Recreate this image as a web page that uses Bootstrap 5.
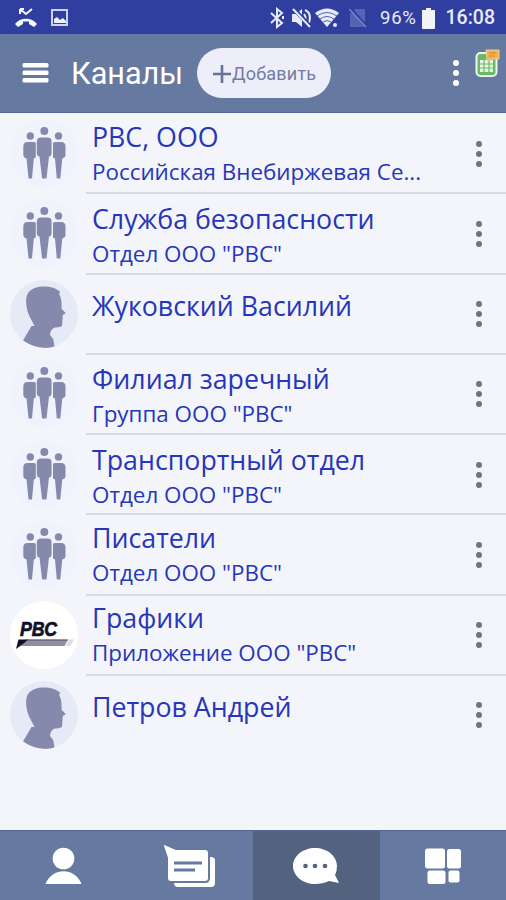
<!DOCTYPE html>
<html lang="ru">
<head>
<meta charset="utf-8">
<meta name="viewport" content="width=device-width, initial-scale=1">
<title>Каналы</title>
<link rel="stylesheet" href="https://cdn.jsdelivr.net/npm/bootstrap@5.3.0/dist/css/bootstrap.min.css">
<style>
body{background:#f3f5fa;font-family:"Open Sans","Noto Sans",sans-serif;height:900px;overflow:hidden}
svg{display:block;flex:none}
.status{height:34px;background:#303f9f;color:#e8ebf8;font:500 18.5px/34px Roboto,sans-serif;padding:2px 11px 0 15px}
.topbar{height:79px;background:#667aa1;border-bottom:1px solid #526995;padding:0 7px 0 22px}
.topbar h1{font:400 30.6px/40px Roboto,sans-serif;letter-spacing:0;margin:2px 0 0 22px;width:126px;white-space:nowrap}
.add-btn{width:134px;height:50px;border-radius:25px;background:#eeeefb;color:#727c9e;font:400 18px/50px Roboto,sans-serif;letter-spacing:.2px;padding:2px 0 0 15px;border:0}
.pct{margin-left:13px;letter-spacing:.7px;font-weight:400}
.clock{margin-left:10px;font-size:19.5px}
.chan{height:80.25px;padding-left:10px}
.avatar{width:68px;height:68px;margin:6.5px 8px 0 0;overflow:hidden;border-radius:50%;background:#f0f3fc}
.avatar.person{background:#e6eaf7}
.avatar.logo{background:#fff}
.info{border-bottom:2px solid #d9dbe1;margin-bottom:-1px;padding:0 15px 0 6px;color:#2736b8;min-width:0}
.chan:last-child .info{border-color:transparent}
.info>svg{margin-top:2px}
.label{padding-top:5.5px}
.name{font-size:26.75px;line-height:36px;white-space:nowrap}
.desc{font-size:22.4px;line-height:33px;white-space:nowrap}
.single .label{padding-top:14px}
.low .label{padding-top:7.5px}
.tabs{height:70px;background:#667aa1;border-top:1px solid #526995}
.tabs .active{background:#52627f}
</style>
</head>
<body class="d-flex flex-column">
<svg width="0" height="0" class="position-absolute">
<symbol id="group" viewBox="0 0 68 68"><g fill="#858aad"><circle cx="34.300" cy="7.500" r="4"/><path d="M31 14h6.600q4 0 4 4v12q0 2.500-2.600 3L36.500 55h-4.400L29.500 33q-2.700-.5-2.700-3V18q0-4 4.200-4Z"/><circle cx="20.300" cy="12.500" r="3.700"/><path d="M17.500 18.500H23q2.800 0 2.800 1V34q-1 .5-2 1L22 55h-3.500L16.500 35q-3.200-1-3.200-3v-9q0-4.500 4.200-4.500Z"/><circle cx="48.500" cy="12.500" r="3.700"/><path d="M51.300 18.500h-5.500q-2.800 0-2.800 1V34q1 .5 2 1l1.800 20h3.500l2-20q3.200-1 3.200-3v-9q0-4.500-4.200-4.500Z"/></g></symbol>
<symbol id="person" viewBox="0 0 68 68"><path fill="#858aad" d="M32 6.500c7-.5 14 1.500 18 5l-.8 2.800c1.500 2.500 2 5 2.300 8.200l.2 6.500 3.800 3.800q0 1.500-2.700 2L52 46q-3 1.500-7 1.500c-3 1-5 4-5 7.500l3.200 4 1.500 8.500Q27 70 13 60.500L21.500 46h3C22 40 19 37 17.500 31 15.500 23 15 14 21 10q5-3.500 11-3.500Z"/></symbol>
<symbol id="dots" viewBox="0 0 8 28"><circle cx="4" cy="4" r="3"/><circle cx="4" cy="14" r="3"/><circle cx="4" cy="24" r="3"/></symbol>
</svg>

<div class="status d-flex align-items-center flex-shrink-0">
<svg width="23" height="24" viewBox="0 0 23 24" fill="none" stroke="#f5f7ff"><path stroke-width="2" d="M5 8V3m0 0h4M5 3l6 5 6-5"/><path fill="#f5f7ff" stroke="none" d="M0 18C5 11 17 11 22 18l-3 3-5-3v-2.500H8V18l-5 3Z"/></svg>
<svg style="margin-left:12px" width="20" height="22" viewBox="0 0 20 22"><path fill="none" stroke="#cdd2ef" stroke-width="2" d="M2 3h15v15H2z"/><path fill="#eef0fb" d="M4 16v-4l3-2 3 3 3-2 3 3v2z"/></svg>
<div class="d-flex align-items-center ms-auto">
<svg width="14" height="22" viewBox="0 0 14 22" fill="none" stroke="#e8ebf8" stroke-width="2"><path d="m1 6 11 10-5 4V2l5 4L1 16"/><path d="M13 9v3" stroke-width="2"/></svg>
<svg style="margin-left:7px" width="21" height="22" viewBox="0 0 21 22"><path fill="#e8ebf8" d="M1 7h4l6-5v18l-6-5H1z"/><path fill="none" stroke="#e8ebf8" stroke-width="2" d="M13 7q3 4 0 8M14 3q7 3 4 13"/><path stroke="#303f9f" stroke-width="4" d="m2 1 18 19"/><path stroke="#e8ebf8" stroke-width="2" d="m2 2 17 18"/></svg>
<svg style="margin-left:3px" width="25" height="22" viewBox="0 0 25 22"><path fill="#e8ebf8" d="M0 6Q12-3 24 6L12 20Z"/><path stroke="#303f9f" fill="none" stroke-width=".8" d="M2 9q10-7 20 0M5 12q7-5 14 0M8 15q4-3 8 0"/><circle cx="20" cy="18" r="2" fill="#e8ebf8"/></svg>
<svg style="margin-left:9px" width="18" height="20" viewBox="0 0 18 20"><path fill="#5664b6" d="M6 1h10v18H1V6z"/><path stroke="#303f9f" stroke-width="3" d="m1 0 17 19"/><path stroke="#7985cb" stroke-width="1.500" d="m0 1 17 18"/></svg>
<span class="pct">96%</span>
<svg class="ms-1" width="15" height="21" viewBox="0 0 15 21"><path fill="#f2f2f7" d="M5 0h5v2h4v18q0 1-1 1H2q-1 0-1-1V2h4z"/></svg>
<span class="clock">16:08</span>
</div>
</div>

<header class="topbar d-flex align-items-center text-white flex-shrink-0">
<svg width="27" height="22" viewBox="0 0 27 22"><g fill="#fff"><rect x=".5" y="1" width="26" height="4.500" rx="1.500"/><rect x=".5" y="8.500" width="26" height="4.500" rx="1.500"/><rect x=".5" y="16" width="26" height="4.500" rx="1.500"/></g></svg>
<h1>Каналы</h1>
<button class="add-btn d-flex align-items-center"><svg width="20" height="20" viewBox="0 0 20 20"><path stroke="#65729a" stroke-width="2.600" d="M1 10h18M10 1v18"/></svg><span>Добавить</span></button>
<svg class="ms-auto" width="8" height="28" fill="#fff"><use href="#dots"/></svg>
<svg style="margin:-19px -1px 0 15px" width="25" height="30" viewBox="0 0 25 30"><rect x="1.500" y="4" width="20" height="23" rx="4" fill="#6bb86a" stroke="#edf5ec" stroke-width="2"/><path fill="#e7f6e2" d="M5 11h13v12H5z"/><path stroke="#6bb86a" stroke-width="1.200" d="M9 11v12M14 11v12M5 15h13M5 19h13"/><path fill="#f3b24c" stroke="#ead09d" d="M11 1h13v9H15l-3 2z"/><path stroke="#c98730" d="M14 4h7M14 7h6"/></svg>
</header>

<main class="flex-grow-1">
<div class="chan d-flex"><div class="avatar flex-shrink-0"><svg width="68" height="68"><use href="#group" y="3.500"/></svg></div><div class="info flex-grow-1 d-flex"><div class="label"><div class="name">РВС, ООО</div><div class="desc">Российская Внебиржевая Се...</div></div><svg class="ms-auto align-self-center" width="24" height="28" fill="#737479"><use href="#dots"/></svg></div></div>
<div class="chan d-flex"><div class="avatar flex-shrink-0"><svg width="68" height="68"><use href="#group" y="3.500"/></svg></div><div class="info low flex-grow-1 d-flex"><div class="label"><div class="name">Служба безопасности</div><div class="desc">Отдел ООО "РВС"</div></div><svg class="ms-auto align-self-center" width="24" height="28" fill="#737479"><use href="#dots"/></svg></div></div>
<div class="chan d-flex"><div class="avatar person flex-shrink-0"><svg width="68" height="68"><use href="#person"/></svg></div><div class="info single flex-grow-1 d-flex"><div class="label"><div class="name">Жуковский Василий</div></div><svg class="ms-auto align-self-center" width="24" height="28" fill="#737479"><use href="#dots"/></svg></div></div>
<div class="chan d-flex"><div class="avatar flex-shrink-0"><svg width="68" height="68"><use href="#group" y="3.500"/></svg></div><div class="info low flex-grow-1 d-flex"><div class="label"><div class="name">Филиал заречный</div><div class="desc">Группа ООО "РВС"</div></div><svg class="ms-auto align-self-center" width="24" height="28" fill="#737479"><use href="#dots"/></svg></div></div>
<div class="chan d-flex"><div class="avatar flex-shrink-0"><svg width="68" height="68"><use href="#group" y="3.500"/></svg></div><div class="info low flex-grow-1 d-flex"><div class="label"><div class="name">Транспортный отдел</div><div class="desc">Отдел ООО "РВС"</div></div><svg class="ms-auto align-self-center" width="24" height="28" fill="#737479"><use href="#dots"/></svg></div></div>
<div class="chan d-flex"><div class="avatar flex-shrink-0"><svg width="68" height="68"><use href="#group" y="3.500"/></svg></div><div class="info flex-grow-1 d-flex"><div class="label"><div class="name">Писатели</div><div class="desc">Отдел ООО "РВС"</div></div><svg class="ms-auto align-self-center" width="24" height="28" fill="#737479"><use href="#dots"/></svg></div></div>
<div class="chan d-flex"><div class="avatar logo flex-shrink-0"><svg width="68" height="68" viewBox="0 0 68 68"><text x="10" y="35" textLength="37" lengthAdjust="spacingAndGlyphs" font-family="Liberation Sans, sans-serif" font-size="20.500" font-weight="bold" font-style="italic" fill="#11102b" stroke="#11102b" stroke-width=".7">РВС</text><path fill="#8e8fa2" d="M16 38.500h42l-3.500 6.500H11z"/><path fill="#62637a" d="M16 38.500h42l-.6 1.200H15z"/><path fill="#dddde2" d="M59 38.500h5L60.500 45h-5z"/><path fill="#11102b" d="M8.500 38.500H18l-5 4.500-7 5z"/></svg></div><div class="info flex-grow-1 d-flex"><div class="label"><div class="name">Графики</div><div class="desc">Приложение ООО "РВС"</div></div><svg class="ms-auto align-self-center" width="24" height="28" fill="#737479"><use href="#dots"/></svg></div></div>
<div class="chan d-flex"><div class="avatar person flex-shrink-0"><svg width="68" height="68"><use href="#person"/></svg></div><div class="info single flex-grow-1 d-flex"><div class="label"><div class="name">Петров Андрей</div></div><svg class="ms-auto align-self-center" width="24" height="28" fill="#737479"><use href="#dots"/></svg></div></div>
</main>

<nav class="tabs row g-0 flex-shrink-0">
<a class="col h-100 d-flex justify-content-center align-items-center" href="#"><svg width="38" height="38" viewBox="0 0 38 38" fill="#fff"><circle cx="19.500" cy="11.500" r="10.800"/><path d="M1.500 37C8 20 31 20 37.500 37Z"/></svg></a>
<a class="col h-100 d-flex justify-content-center align-items-center" href="#"><svg width="54" height="44" viewBox="0 0 54 44"><rect x="11" y="13" width="41" height="30" rx="4" fill="#fff"/><path fill="#fff" stroke="#667aa1" stroke-width="2" d="m-1-1 14 6h29q4 0 4 4v25q0 4-4 4H8q-4 0-4-4V14Z"/><path stroke="#667aa1" stroke-width="3" d="M11 19h28M11 26h21"/></svg></a>
<a class="col h-100 active d-flex justify-content-center align-items-center" href="#"><svg width="46" height="36" viewBox="0 0 46 36"><path fill="#fff" d="M22 0c12 0 22 8 22 18q0 5-2 9l4 8-10-2q-6 3-14 3C10 36 0 28 0 18S10 0 22 0Z"/><g fill="#52627f"><circle cx="12.500" cy="18" r="2.300"/><circle cx="22" cy="18" r="2.300"/><circle cx="32" cy="18" r="2.300"/></g></svg></a>
<a class="col h-100 d-flex justify-content-center align-items-center" href="#"><svg width="37" height="36" viewBox="0 0 37 36" fill="#fff"><rect x="1" y=".5" width="20" height="20" rx="2.500"/><rect x="23" y="1" width="14" height="19.500" rx="2.500"/><rect x="3.500" y="22.500" width="18" height="13.500" rx="2.500"/><rect x="24.500" y="22.500" width="11" height="12" rx="2"/></svg></a>
</nav>
<script src="https://cdn.jsdelivr.net/npm/bootstrap@5.3.0/dist/js/bootstrap.bundle.min.js"></script>
</body>
</html>
